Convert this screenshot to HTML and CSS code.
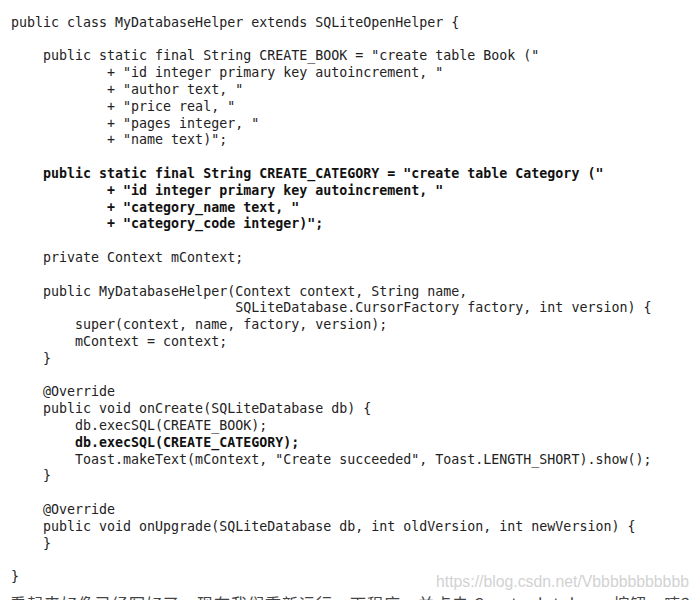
FILE: index.html
```html
<!DOCTYPE html>
<html lang="zh">
<head>
<meta charset="utf-8">
<title>MyDatabaseHelper</title>
<link rel="stylesheet" href="styles.css">
</head>
<body>
<div class="page">
<pre class="code">public class MyDatabaseHelper extends SQLiteOpenHelper {

    public static final String CREATE_BOOK = "create table Book ("
            + "id integer primary key autoincrement, "
            + "author text, "
            + "price real, "
            + "pages integer, "
            + "name text)";

<b class="hl">    public static final String CREATE_CATEGORY = "create table Category ("
            + "id integer primary key autoincrement, "
            + "category_name text, "
            + "category_code integer)";</b>

    private Context mContext;

    public MyDatabaseHelper(Context context, String name,
                            SQLiteDatabase.CursorFactory factory, int version) {
        super(context, name, factory, version);
        mContext = context;
    }

    @Override
    public void onCreate(SQLiteDatabase db) {
        db.execSQL(CREATE_BOOK);
<b class="hl">        db.execSQL(CREATE_CATEGORY);</b>
        Toast.makeText(mContext, "Create succeeded", Toast.LENGTH_SHORT).show();
    }

    @Override
    public void onUpgrade(SQLiteDatabase db, int oldVersion, int newVersion) {
    }

}</pre>
<p class="after">看起来好像已经写好了，现在我们重新运行一下程序，并点击 Create database 按钮，咦？竟然没有弹出创建成功的提示。</p>
<span class="watermark">https://blog.csdn.net/Vbbbbbbbbbbb</span>
</div>
</body>
</html>
```

FILE: styles.css
```css
html, body {
  margin: 0;
  padding: 0;
  background: #ffffff;
}

.page {
  position: relative;
  width: 699px;
  height: 600px;
  overflow: hidden;
}

.code {
  margin: 0;
  padding: 14.8px 0 0 11px;
  font-family: "DejaVu Sans Mono", monospace;
  font-size: 13.3px;
  line-height: 16.79px;
  color: #222222;
  white-space: pre;
}

.hl {
  font-weight: bold;
  color: #111111;
}

.after {
  margin: 9.2px 0 0 10px;
  font-family: "Noto Sans CJK SC", sans-serif;
  font-size: 16px;
  line-height: 16.8px;
  color: #444444;
  white-space: nowrap;
  letter-spacing: 1px;
}

.watermark {
  position: absolute;
  left: 436px;
  top: 573px;
  font-family: "Liberation Sans", Arial, sans-serif;
  font-size: 15.8px;
  line-height: 18px;
  color: #d2d2d2;
  white-space: nowrap;
}
```
